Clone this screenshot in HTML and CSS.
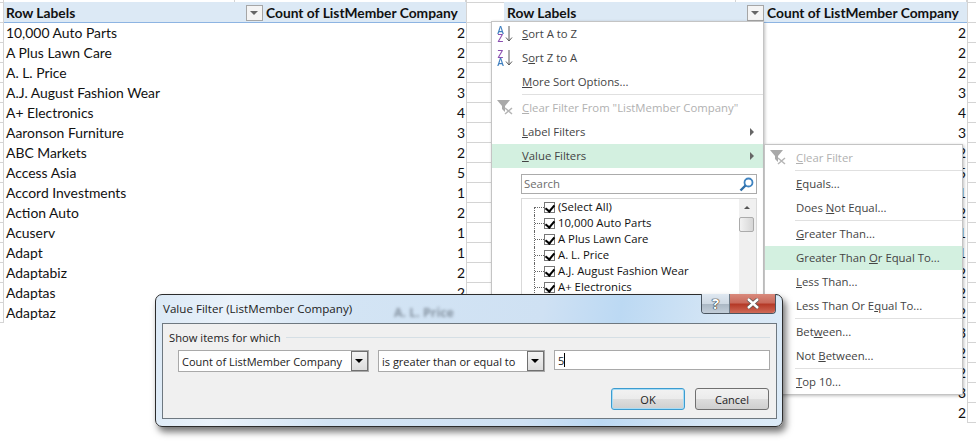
FILE: index.html
```html
<!DOCTYPE html>
<html lang="en">

<head>
    <meta charset="UTF-8">
    <title>Value Filter</title>
    <link rel="stylesheet" href="styles.css">
</head>

<body>
    <div id="stage">
        <!-- Plain pivot table -->
        <section class="sheet sheet-left">
            <div class="grid">
                <div class="top-ticks"><i></i><i></i></div>
                <div class="head">
                    <div class="head-cell">Row Labels
                        <span class="filter-btn"><b></b></span>
                    </div>
                    <div class="head-cell head-count">Count of ListMember Company</div>
                </div>
                <div class="row"><span>10,000 Auto Parts</span><span>2</span></div>
                <div class="row"><span>A Plus Lawn Care</span><span>2</span></div>
                <div class="row"><span>A. L. Price</span><span>2</span></div>
                <div class="row"><span>A.J. August Fashion Wear</span><span>3</span></div>
                <div class="row"><span>A+ Electronics</span><span>4</span></div>
                <div class="row"><span>Aaronson Furniture</span><span>3</span></div>
                <div class="row"><span>ABC Markets</span><span>2</span></div>
                <div class="row"><span>Access Asia</span><span>5</span></div>
                <div class="row"><span>Accord Investments</span><span>1</span></div>
                <div class="row"><span>Action Auto</span><span>2</span></div>
                <div class="row"><span>Acuserv</span><span>1</span></div>
                <div class="row"><span>Adapt</span><span>1</span></div>
                <div class="row"><span>Adaptabiz</span><span>2</span></div>
                <div class="row"><span>Adaptas</span><span>2</span></div>
                <div class="row"><span>Adaptaz</span><span>2</span></div>
            </div>
        </section>

        <!-- Same table with the filter menu open -->
        <section class="sheet sheet-right">
            <div class="grid">
                <div class="top-ticks"><i></i><i></i></div>
                <div class="head">
                    <div class="head-cell">Row Labels
                        <span class="filter-btn"><b></b></span>
                    </div>
                    <div class="head-cell head-count">Count of ListMember Company</div>
                </div>
                <div class="row"><span></span><span>2</span></div>
                <div class="row"><span></span><span>2</span></div>
                <div class="row"><span></span><span>2</span></div>
                <div class="row"><span></span><span>3</span></div>
                <div class="row"><span></span><span>4</span></div>
                <div class="row"><span></span><span>3</span></div>
                <div class="row"><span></span><span>2</span></div>
                <div class="row"><span></span><span>5</span></div>
                <div class="row"><span></span><span>1</span></div>
                <div class="row"><span></span><span>2</span></div>
                <div class="row"><span></span><span>1</span></div>
                <div class="row"><span></span><span>1</span></div>
                <div class="row"><span></span><span>2</span></div>
                <div class="row"><span></span><span>2</span></div>
                <div class="row"><span></span><span>2</span></div>
                <div class="row"><span></span><span>3</span></div>
                <div class="row"><span></span><span>2</span></div>
                <div class="row"><span></span><span>2</span></div>
                <div class="row"><span></span><span>3</span></div>
                <div class="row"><span></span><span>2</span></div>
            </div>
        </section>

        <!-- Filter dropdown -->
        <div id="filter-menu" class="menu">
            <div class="menu-item">
                <div class="sort-icon">
                    <div class="sort-letters sort-az">A<br>Z</div>
                    <svg width="8" height="16" viewBox="0 0 8 16"><path d="M4 0v15M1 11.5l3 3.5 3-3.5" class="sort-arrow" /></svg>
                </div>
                <span class="item-text"><u>S</u>ort A to Z</span>
            </div>
            <div class="menu-item">
                <div class="sort-icon">
                    <div class="sort-letters sort-za">Z<br>A</div>
                    <svg width="8" height="16" viewBox="0 0 8 16"><path d="M4 0v15M1 11.5l3 3.5 3-3.5" class="sort-arrow" /></svg>
                </div>
                <span class="item-text">S<u>o</u>rt Z to A</span>
            </div>
            <div class="menu-item"><span class="item-text"><u>M</u>ore Sort Options...</span></div>
            <div class="menu-sep"></div>
            <div class="menu-item disabled">
                <svg class="menu-icon" width="16" height="16" viewBox="0 0 16 16">
                    <path d="M0 1h13L8 7v6L5 10V7z" fill="#a9a9a9" />
                    <path d="M8 9l7 6M15 9l-7 6" stroke="#b5b5b5" stroke-width="1.5" fill="none" />
                </svg>
                <span class="item-text"><u>C</u>lear Filter From "ListMember Company"</span>
            </div>
            <div class="menu-item has-sub"><span class="item-text"><u>L</u>abel Filters</span></div>
            <div class="menu-item has-sub active"><span class="item-text"><u>V</u>alue Filters</span></div>
            <div class="search-box">
                <span class="item-text">Search</span>
                <svg width="15" height="15" viewBox="0 0 15 15">
                    <circle cx="9.5" cy="5.5" r="4" fill="none" stroke="#3f83c0" stroke-width="1.8" />
                    <path d="M6.5 8.5L1.5 13.5" stroke="#2f6ea8" stroke-width="2.4" />
                </svg>
            </div>
            <div class="check-list">
                <div class="check-items">
                    <div class="check-row"><i class="tree"></i><span class="check"></span>(Select All)</div>
                    <div class="check-row"><i class="tree"></i><span class="check"></span>10,000 Auto Parts</div>
                    <div class="check-row"><i class="tree"></i><span class="check"></span>A Plus Lawn Care</div>
                    <div class="check-row"><i class="tree"></i><span class="check"></span>A. L. Price</div>
                    <div class="check-row"><i class="tree"></i><span class="check"></span>A.J. August Fashion Wear</div>
                    <div class="check-row"><i class="tree"></i><span class="check"></span>A+ Electronics</div>
                </div>
                <div class="scrollbar">
                    <b class="scroll-up"></b>
                    <span class="scroll-thumb"></span>
                </div>
            </div>
        </div>

        <!-- Value Filters submenu -->
        <div id="value-menu" class="menu">
            <div class="menu-item disabled">
                <svg class="menu-icon" width="16" height="16" viewBox="0 0 16 16">
                    <path d="M0 1h13L8 7v6L5 10V7z" fill="#a9a9a9" />
                    <path d="M8 9l7 6M15 9l-7 6" stroke="#b5b5b5" stroke-width="1.5" fill="none" />
                </svg>
                <span class="item-text"><u>C</u>lear Filter</span>
            </div>
            <div class="menu-sep"></div>
            <div class="menu-item"><span class="item-text"><u>E</u>quals...</span></div>
            <div class="menu-item"><span class="item-text">Does <u>N</u>ot Equal...</span></div>
            <div class="menu-sep"></div>
            <div class="menu-item"><span class="item-text"><u>G</u>reater Than...</span></div>
            <div class="menu-item active"><span class="item-text">Greater Than <u>O</u>r Equal To...</span></div>
            <div class="menu-item"><span class="item-text"><u>L</u>ess Than...</span></div>
            <div class="menu-item"><span class="item-text">Less Than Or E<u>q</u>ual To...</span></div>
            <div class="menu-sep"></div>
            <div class="menu-item"><span class="item-text">Bet<u>w</u>een...</span></div>
            <div class="menu-item"><span class="item-text">Not <u>B</u>etween...</span></div>
            <div class="menu-sep"></div>
            <div class="menu-item"><span class="item-text"><u>T</u>op 10...</span></div>
        </div>

        <!-- Dialog -->
        <div id="dialog">
            <span class="glass-ghost">A. L. Price</span>
            <div class="title-bar">
                <span class="title">Value Filter (ListMember Company)</span>
                <div class="win-buttons">
                    <span class="win-help">?</span>
                    <span class="win-close">
                        <svg width="14" height="11" viewBox="0 0 14 11">
                            <path d="M2 1l10 9M12 1L2 10" stroke="#5d5552" stroke-width="4" fill="none" />
                            <path d="M2 1l10 9M12 1L2 10" stroke="#fff" stroke-width="2.4" fill="none" />
                        </svg>
                    </span>
                </div>
            </div>
            <div class="panel">
                <div class="group-label">
                    <span>Show items for which</span>
                    <i></i>
                </div>
                <div class="field-row">
                    <div class="combo combo-field">
                        <span>Count of ListMember Company</span>
                        <span class="combo-btn"><b></b></span>
                    </div>
                    <div class="combo combo-op">
                        <span>is greater than or equal to</span>
                        <span class="combo-btn"><b></b></span>
                    </div>
                    <div class="value-input">5<i class="caret"></i></div>
                </div>
                <div class="button-row">
                    <button class="btn btn-default">OK</button>
                    <button class="btn">Cancel</button>
                </div>
            </div>
        </div>
    </div>
</body>

</html>
```

FILE: styles.css
```css
/* General reset */
* {
    margin: 0;
    padding: 0;
    box-sizing: border-box;
}

body {
    background: #fff;
    overflow: hidden;
}

#stage {
    position: relative;
    display: flex;
    align-items: flex-start;
    width: 976px;
    height: 441px;
    overflow: hidden;
    font-family: "Open Sans", sans-serif;
}

/* Sheets */
.sheet {
    /* grid lines left visible around the table */
    background: linear-gradient(to bottom, transparent 19px, #d4d4d4 19px) 0 3px / 100% 20px;
    font-family: Lato, sans-serif;
    font-size: 13.9px;
    color: #111;
}

.sheet-left {
    width: 467px;
    height: 323px;
    padding-left: 3px;
}

.sheet-right {
    width: 509px;
    height: 423px;
    padding-left: 37px;
}

.grid {
    display: flex;
    flex-direction: column;
    background: #fff;
    border-left: 1px solid #d4d4d4;
    border-right: 1px solid #d4d4d4;
}

.sheet-left .grid {
    width: 464px;
}

.sheet-right .grid {
    width: 464px;
    border-left: 0;
}

.top-ticks {
    display: flex;
    height: 2px;
}

.top-ticks i {
    width: 260px;
    border-right: 1px solid #d4d4d4;
}

.head {
    display: flex;
    height: 21px;
    background: #dce9f5;
    border-bottom: 1px solid #8db4e2;
    font-size: 13.8px;
    font-weight: 700;
}

.head-cell {
    position: relative;
    width: 259px;
    padding: 1px 0 0 2px;
    line-height: 20px;
}

.sheet-right .head-cell:first-child {
    width: 260px;
    padding-left: 3px;
}

.head-count {
    width: auto;
    flex: 1;
    padding-left: 3px;
}

.filter-btn {
    position: absolute;
    right: 0;
    top: 3px;
    width: 17px;
    height: 16px;
    background: #f4f4f4;
    border: 1px solid #a6a6a6;
}

.filter-btn b {
    position: absolute;
    left: 3px;
    top: 5px;
    border: 4px solid transparent;
    border-top: 4px solid #666;
    border-bottom: 0;
}

.row {
    display: flex;
    justify-content: space-between;
    height: 20px;
    padding: 0 1px 0 2px;
    line-height: 20px;
}

/* Menus */
.menu {
    position: absolute;
    background: #fff;
    border: 1px solid #c4c4c4;
    box-shadow: 1px 1px 3px rgba(0, 0, 0, 0.25);
    font-size: 11.35px;
    color: #444;
}

#filter-menu {
    left: 491px;
    top: 21px;
    width: 273px;
    height: 290px;
    padding-bottom: 1px;
}

#value-menu {
    left: 764px;
    top: 144px;
    width: 199px;
    height: 251px;
    padding: 1px 0 0;
}

.menu-item {
    position: relative;
    display: flex;
    align-items: center;
    height: 24px;
    padding-left: 30px;
}

.item-text {
    margin-top: -2px;
}

#value-menu .menu-item {
    padding-left: 31px;
}

.menu-item.active {
    background: #d3f0e0;
}

.menu-item.disabled {
    color: #b1b1b1;
}

.menu-icon {
    position: absolute;
    left: 5px;
    top: 3px;
}

.sort-icon {
    position: absolute;
    left: 5px;
    top: 4px;
    display: flex;
    gap: 1px;
}

/* one text block, two letter colours */
.sort-letters {
    width: 7px;
    height: 16px;
    font-size: 10px;
    font-weight: 600;
    line-height: 8px;
    text-align: center;
    color: transparent;
    -webkit-background-clip: text;
    background-clip: text;
}

.sort-az {
    background-image: linear-gradient(to bottom, #3f7fbf 50%, #8a4fb0 50%);
}

.sort-za {
    background-image: linear-gradient(to bottom, #8a4fb0 50%, #3f7fbf 50%);
}

.sort-arrow {
    fill: none;
    stroke: #5a5a5a;
    stroke-width: 1;
}

.menu-sep {
    height: 1px;
    margin: 0 0 1px 30px;
    background: #e0e0e0;
}

.has-sub::after {
    content: "";
    position: absolute;
    right: 9px;
    top: 8px;
    border: 4px solid transparent;
    border-left: 4px solid #666;
    border-right: 0;
}

/* Search box and list */
.search-box {
    display: flex;
    align-items: center;
    justify-content: space-between;
    width: 236px;
    height: 20px;
    margin: 6px 0 4px 29px;
    padding: 0 2px 0 2px;
    border: 1px solid #ababab;
    color: #6d6d6d;
}

.check-list {
    display: flex;
    justify-content: space-between;
    width: 236px;
    height: 100px;
    margin-left: 29px;
    border: 1px solid #d9d9d9;
    color: #111;
}

.check-row {
    position: relative;
    display: flex;
    align-items: center;
    height: 16px;
    padding: 0 0 2px 22px;
}

.check-row:first-child .tree {
    top: 8px;
}

.check-row:first-child .tree::after {
    top: 0;
}

.tree {
    position: absolute;
    left: 12px;
    top: 0;
    bottom: 0;
    width: 10px;
    border-left: 1px dotted #666;
}

.tree::after {
    content: "";
    position: absolute;
    left: 0;
    right: 0;
    top: 8px;
    border-top: 1px dotted #666;
}

.check {
    position: relative;
    width: 11px;
    height: 11px;
    margin: 2px 3px 0 0;
    background: #fff;
    border: 1px solid #777;
}

.check::after {
    content: "";
    position: absolute;
    left: 2px;
    top: 0;
    width: 4px;
    height: 7px;
    border: solid #000;
    border-width: 0 2px 2px 0;
    transform: rotate(40deg);
}

.scrollbar {
    position: relative;
    width: 17px;
    background: #f0f0f0;
}

.scroll-up {
    position: absolute;
    left: 5px;
    top: 7px;
    border: 3px solid transparent;
    border-bottom: 3px solid #555;
    border-top: 0;
}

.scroll-thumb {
    position: absolute;
    left: 0;
    top: 18px;
    width: 15px;
    height: 15px;
    background: linear-gradient(to right, #f2f2f2, #d6d6d6);
    border: 1px solid #ababab;
    border-radius: 2px;
}

/* Dialog */
#dialog {
    position: absolute;
    left: 155px;
    top: 294px;
    width: 628px;
    height: 133px;
    display: flex;
    flex-direction: column;
    padding: 0 5px 7px 6px;
    background: linear-gradient(100deg, #dbe9f6 0%, #eaf2fa 12%, #d3e4f4 30%, #cfe1f3 60%, #bcd9f3 72%, #d6e6f5 88%, #dcebf8 100%);
    border: 1px solid #2c2c2c;
    border-radius: 7px;
    box-shadow: 3px 5px 7px rgba(0, 0, 0, 0.55);
    font-size: 11.6px;
    color: #222;
}

.glass-ghost {
    position: absolute;
    left: 238px;
    top: 9px;
    font-size: 12.4px;
    font-weight: 700;
    color: #55606c;
    opacity: 0.6;
    filter: blur(1.4px);
}

.title-bar {
    display: flex;
    justify-content: space-between;
    height: 28px;
    flex-shrink: 0;
    padding-left: 1px;
}

.title {
    position: relative;
    line-height: 28px;
}

.win-buttons {
    display: flex;
    height: 20px;
    margin: -1px 1px 0 0;
    border: 1px solid #4a5560;
    border-top: 0;
    border-radius: 0 0 4px 4px;
    overflow: hidden;
}

.win-help {
    width: 28px;
    background: linear-gradient(to bottom, #dfe8f1 0%, #cfd9e3 50%, #a9b6c3 51%, #c3ced9 100%);
    border-right: 1px solid #6d7a86;
    font-size: 15px;
    font-weight: 700;
    line-height: 19px;
    text-align: center;
    color: #fff;
    text-shadow: 0 0 1px #222, 0 0 1px #222, 0 0 1px #222;
}

.win-close {
    display: flex;
    align-items: center;
    justify-content: center;
    width: 45px;
    background: linear-gradient(to bottom, #d98a7c 0%, #c96a5c 45%, #b53a28 55%, #cf6a58 100%);
}

.panel {
    flex: 1;
    display: flex;
    flex-direction: column;
    padding: 5px 6px 7px 6px;
    background: #f0f0f0;
    border: 1px solid #6e7880;
}

.group-label {
    display: flex;
    align-items: center;
    gap: 5px;
    height: 17px;
    font-size: 11.2px;
}

.group-label span {
    margin-top: -1px;
}

.group-label i {
    flex: 1;
    height: 1px;
    background: #d5dfe5;
}

.field-row {
    display: flex;
    gap: 9px;
    margin: 4px 0 0 9px;
    font-size: 11px;
}

.combo {
    display: flex;
    align-items: center;
    justify-content: space-between;
    height: 22px;
    padding-left: 3px;
    background: #fff;
    border: 1px solid #a9a9a9;
}

.combo-field {
    width: 191px;
}

.combo-op {
    width: 167px;
}

.combo-btn {
    position: relative;
    width: 17px;
    height: 20px;
    background: linear-gradient(to bottom, #f3f3f3, #dcdcdc);
    border: 1px solid #707070;
}

.combo-btn b {
    position: absolute;
    left: 3px;
    top: 7px;
    border: 4px solid transparent;
    border-top: 4px solid #000;
    border-bottom: 0;
}

.value-input {
    display: flex;
    align-items: center;
    flex: 1;
    height: 20px;
    padding-left: 3px;
    background: #fff;
    border: 1px solid #a9a9a9;
}

.caret {
    width: 1px;
    height: 14px;
    background: #000;
}

.button-row {
    display: flex;
    justify-content: flex-end;
    gap: 10px;
    margin: 16px 1px 0 0;
}

.btn {
    width: 74px;
    height: 22px;
    font-family: "Open Sans", sans-serif;
    font-size: 11px;
    color: #222;
    background: linear-gradient(to bottom, #f2f2f2 0%, #ebebeb 50%, #dddddd 51%, #cfcfcf 100%);
    border: 1px solid #707070;
    border-radius: 3px;
}

.btn-default {
    border-color: #3c9cd0;
    box-shadow: inset 0 0 0 1px #a8dcf5;
}
```
